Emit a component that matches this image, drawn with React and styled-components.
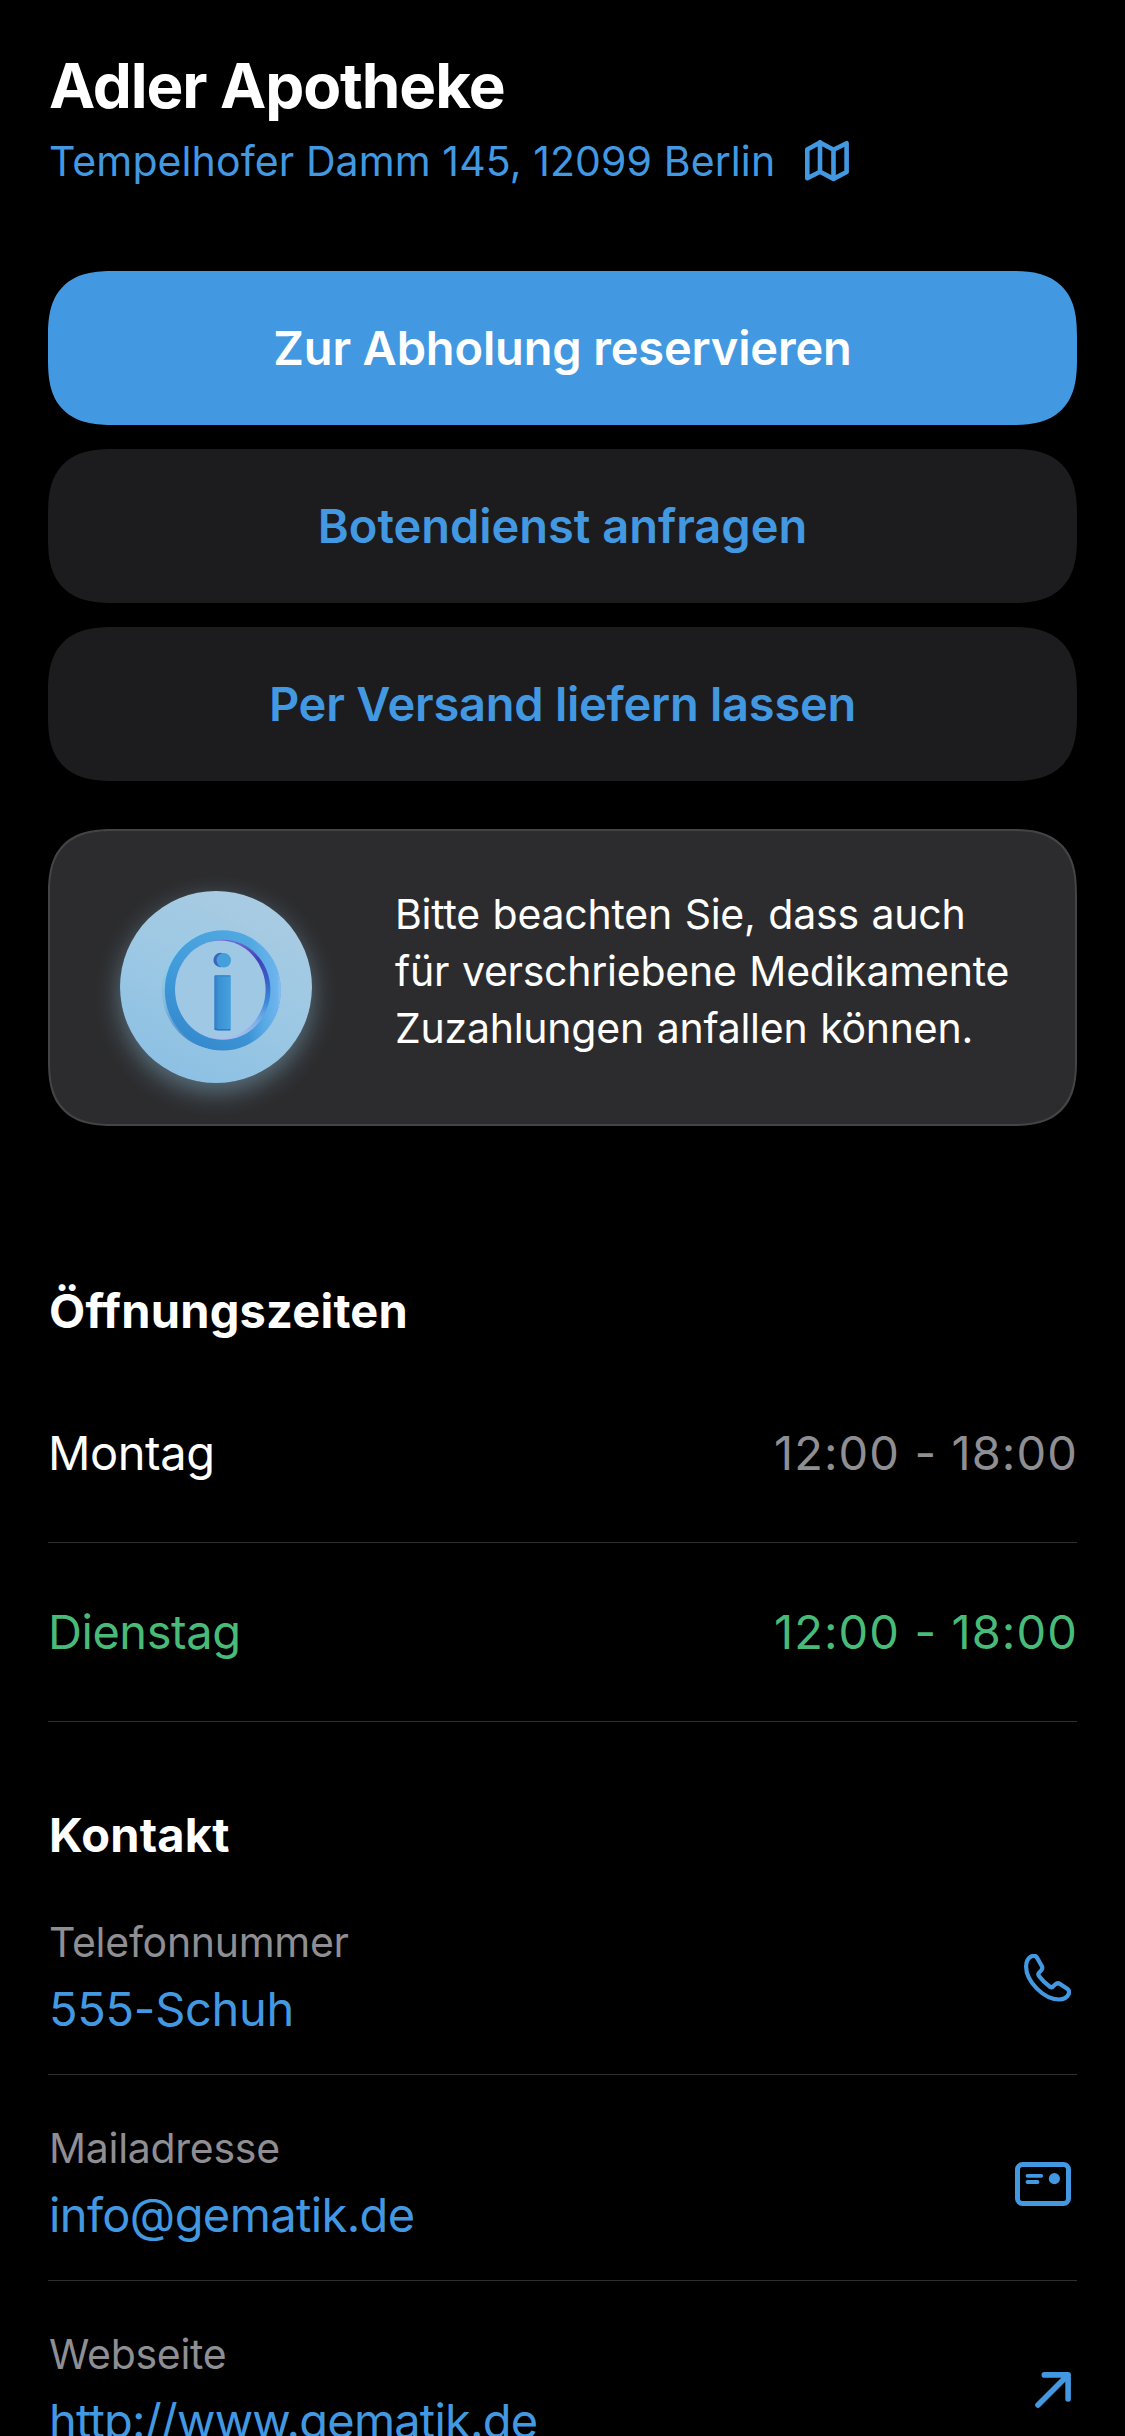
import React from "react";
import styled, { createGlobalStyle } from "styled-components";

const c = {
  blue: "#4299e1",
  green: "#48bb78",
  grey: "#8e8e93",
  surface: "#1c1c1e",
  card: "#2c2c2e",
  line: "#2f2f31",
};

const GlobalStyle = createGlobalStyle`
  * { box-sizing: border-box; }
  body {
    margin: 0;
    background: #000;
    color: #fff;
    font-family: Inter, "Liberation Sans", sans-serif;
    -webkit-font-smoothing: antialiased;
  }
`;

const Screen = styled.main`
  display: flex;
  flex-direction: column;
  height: 2436px;
  padding: 46px 48px 0;
  overflow: hidden;
  background: #000;
`;

const Title = styled.h1`
  margin: 0 0 11px 1px;
  font-size: 62px;
  font-weight: 700;
  line-height: 80px;
  letter-spacing: -1.1px;
`;

const Address = styled.a`
  display: flex;
  align-items: center;
  gap: 30px;
  height: 48px;
  margin-left: 1px;
  color: ${c.blue};
  font-size: 41px;
  line-height: 48px;
  letter-spacing: 0.1px;
  white-space: nowrap;
`;

const Actions = styled.div`
  display: flex;
  flex-direction: column;
  gap: 24px;
  margin-top: 86px;
`;

const ActionButton = styled.button`
  height: 154px;
  border: 0;
  border-radius: 52px;
  background: ${(p) => (p.$primary ? c.blue : c.surface)};
  color: ${(p) => (p.$primary ? "#fff" : c.blue)};
  font: 600 47px/60px Inter, "Liberation Sans", sans-serif;
  letter-spacing: ${(p) => p.$track}px;
  @supports (corner-shape: superellipse(1.4)) {
    border-radius: 66px;
    corner-shape: superellipse(1.4);
  }
`;

const Notice = styled.section`
  display: flex;
  flex: none;
  align-items: flex-start;
  gap: 83px;
  height: 297px;
  margin-top: 48px;
  padding: 60px 0 0 70px;
  border: 2px solid #444446;
  border-radius: 52px;
  background: ${c.card};
  @supports (corner-shape: superellipse(1.4)) {
    border-radius: 66px;
    corner-shape: superellipse(1.4);
  }
`;

const Badge = styled.div`
  flex: none;
  width: 192px;
  height: 192px;
  border-radius: 50%;
  background: linear-gradient(25deg, #8abfe3 5%, #9cc8e4 50%, #abcce2 95%);
  box-shadow: 0 9px 26px rgba(150, 205, 232, 0.45);
`;

const NoticeText = styled.p`
  margin: -5px 0 0;
  font-size: 41px;
  line-height: 57px;
  letter-spacing: -0.25px;
  word-spacing: 1.5px;
  white-space: nowrap;
`;

const Heading = styled.h2`
  margin: ${(p) => p.$top}px 0 ${(p) => p.$bottom}px 1px;
  font-size: 47px;
  font-weight: 700;
  line-height: 60px;
  letter-spacing: 0.2px;
`;

const HoursRow = styled.div`
  display: flex;
  flex: none;
  align-items: center;
  justify-content: space-between;
  height: 179px;
  border-bottom: 1px solid ${c.line};
  color: ${(p) => (p.$open ? c.green : "#fff")};
  font-size: 47px;
  line-height: 60px;
  letter-spacing: -0.45px;
`;

const Time = styled.span`
  margin-right: -1px;
  color: ${(p) => (p.$open ? c.green : c.grey)};
  letter-spacing: 1.1px;
`;

const ContactRow = styled.a`
  display: flex;
  flex: none;
  align-items: center;
  justify-content: space-between;
  height: 206px;
  padding: 48px 6px 35px 0;
  border-bottom: 1px solid ${c.line};
  color: ${c.blue};
`;

const ContactText = styled.div`
  display: flex;
  flex-direction: column;
  gap: 11px;
  margin-left: 1px;
`;

const Label = styled.span`
  color: ${c.grey};
  font-size: 41px;
  line-height: 51px;
  letter-spacing: -0.28px;
`;

const Value = styled.span`
  font-size: 47px;
  line-height: 60px;
  letter-spacing: ${(p) => p.$track}px;
`;

const Icon = styled.svg`
  display: block;
  flex: none;
  fill: none;
  stroke: currentColor;
  stroke-linecap: round;
  stroke-linejoin: round;
`;

const MapIcon = () => (
  <Icon width="44" height="42" viewBox="0 0 44 42" strokeWidth="4.6">
    <path d="M2.3 9.5 L15 2.4 L28.5 9.8 L41.6 3.2 V32 L28.5 38.9 L15 31.8 L2.3 38.2 Z M15 2.4 V31.8 M28.5 9.8 V38.9" />
  </Icon>
);

const PhoneIcon = () => (
  <Icon width="47" height="48" viewBox="0 0 47 48" strokeWidth="4.2">
    <path d="M13 3.6 C11.8 1.7 9.4 1.4 7.3 2.4 C3.6 4.3 2.1 7.8 2.1 12.5 C2.1 27.5 20 45.5 35 45.5 C39.8 45.5 43 43.8 44.6 40.2 C45.5 38.1 45 36 43.2 34.8 L36.1 30 C34.4 28.9 32.7 29.1 31.2 30.5 L29 32.6 C28 33.5 27 33.5 25.9 32.7 C21.5 29.5 18.2 26.2 15 21.9 C14.1 20.7 14.1 19.7 15.1 18.6 L17.2 16.4 C18.5 14.9 18.6 13.3 17.6 11.7 Z" />
  </Icon>
);

const MailIcon = () => (
  <Icon width="56" height="44" viewBox="0 0 56 44" strokeWidth="5">
    <rect x="2.5" y="2.5" width="51" height="39" rx="5" />
    <path d="M12.5 13.8 H26.2 M12.5 20 H22.5" strokeWidth="3.8" />
    <circle cx="39.4" cy="16.6" r="5.6" fill="currentColor" stroke="none" />
  </Icon>
);

const ArrowIcon = () => (
  <Icon width="36" height="36" viewBox="0 0 36 36" strokeWidth="5.6">
    <path d="M3 33 L33 3 M9.3 2.9 H33.1 V27" />
  </Icon>
);

const InfoIcon = () => (
  <svg width="192" height="192" viewBox="0 0 192 192">
    <defs>
      <linearGradient id="ring" x1="0.2" y1="1" x2="0.75" y2="0">
        <stop offset="0" stopColor="#3287cc" />
        <stop offset="0.5" stopColor="#429cda" />
        <stop offset="1" stopColor="#52aae1" />
      </linearGradient>
      <linearGradient id="rim" x1="0.2" y1="0" x2="0.5" y2="1">
        <stop offset="0" stopColor="#98d9f0" />
        <stop offset="0.5" stopColor="#86bce0" />
        <stop offset="1" stopColor="#3078bd" />
      </linearGradient>
      <linearGradient id="right" x1="0" y1="0" x2="1" y2="0">
        <stop offset="0.72" stopColor="#6db6ee" stopOpacity="0" />
        <stop offset="0.97" stopColor="#6db4ee" />
        <stop offset="1" stopColor="#93c2f0" />
      </linearGradient>
      <linearGradient id="inner" x1="0" y1="0" x2="0" y2="1">
        <stop offset="0.02" stopColor="#6f62cf" />
        <stop offset="0.2" stopColor="#4340b8" />
        <stop offset="0.42" stopColor="#3a62c8" />
        <stop offset="0.62" stopColor="#3b8ad8" />
        <stop offset="0.82" stopColor="#7db0ea" />
        <stop offset="1" stopColor="#b3bdec" />
      </linearGradient>
      <linearGradient id="stem" x1="0" y1="0" x2="1" y2="0">
        <stop offset="0" stopColor="#3179c6" />
        <stop offset="0.25" stopColor="#3b91d4" />
        <stop offset="1" stopColor="#45a1dd" />
      </linearGradient>
    </defs>
    <ellipse cx="99.5" cy="99.5" rx="57.7" ry="59" fill="url(#rim)" />
    <ellipse cx="102.8" cy="99.4" rx="58" ry="60.2" fill="url(#ring)" />
    <ellipse cx="102.8" cy="99.4" rx="58" ry="60.2" fill="url(#right)" />
    <ellipse cx="102.8" cy="98.8" rx="47.6" ry="50" fill="url(#inner)" />
    <ellipse cx="100.3" cy="98.4" rx="45.3" ry="48.8" fill="#9fc8e4" />
    <circle cx="100.6" cy="69" r="7.2" fill="#3a65bb" />
    <circle cx="103.8" cy="69.3" r="7.2" fill="#459fdb" />
    <rect x="94.3" y="84.3" width="16.5" height="55" rx="1.5" fill="url(#stem)" />
    <path d="M94.8 137.8 L98 138.9 H110.4" stroke="#2b70bd" strokeWidth="1.3" fill="none" />
    <path d="M94.8 85 H110.4" stroke="#3685ca" strokeWidth="1.3" fill="none" />
  </svg>
);

const hours = [
  { day: "Montag", time: "12:00 - 18:00", open: false },
  { day: "Dienstag", time: "12:00 - 18:00", open: true },
];

const contacts = [
  { label: "Telefonnummer", value: "555-Schuh", track: -0.3, Glyph: PhoneIcon },
  { label: "Mailadresse", value: "info@gematik.de", track: -0.62, Glyph: MailIcon },
  { label: "Webseite", value: "http://www.gematik.de", track: -0.8, Glyph: ArrowIcon },
];

export default function App() {
  return (
    <>
      <GlobalStyle />
      <Screen>
        <Title>Adler Apotheke</Title>
        <Address>
          <span>Tempelhofer Damm 145, 12099 Berlin</span>
          <MapIcon />
        </Address>
        <Actions>
          <ActionButton $primary $track={-0.16}>Zur Abholung reservieren</ActionButton>
          <ActionButton $track={-0.03}>Botendienst anfragen</ActionButton>
          <ActionButton $track={-0.24}>Per Versand liefern lassen</ActionButton>
        </Actions>
        <Notice>
          <Badge>
            <InfoIcon />
          </Badge>
          <NoticeText>
            Bitte beachten Sie, dass auch
            <br />
            für verschriebene Medikamente
            <br />
            Zuzahlungen anfallen können.
          </NoticeText>
        </Notice>
        <Heading $top={155} $bottom={23}>Öffnungszeiten</Heading>
        {hours.map((h) => (
          <HoursRow key={h.day} $open={h.open}>
            <span>{h.day}</span>
            <Time $open={h.open}>{h.time}</Time>
          </HoursRow>
        ))}
        <Heading $top={83} $bottom={4}>Kontakt</Heading>
        {contacts.map(({ label, value, track, Glyph }) => (
          <ContactRow key={label}>
            <ContactText>
              <Label>{label}</Label>
              <Value $track={track}>{value}</Value>
            </ContactText>
            <Glyph />
          </ContactRow>
        ))}
      </Screen>
    </>
  );
}
